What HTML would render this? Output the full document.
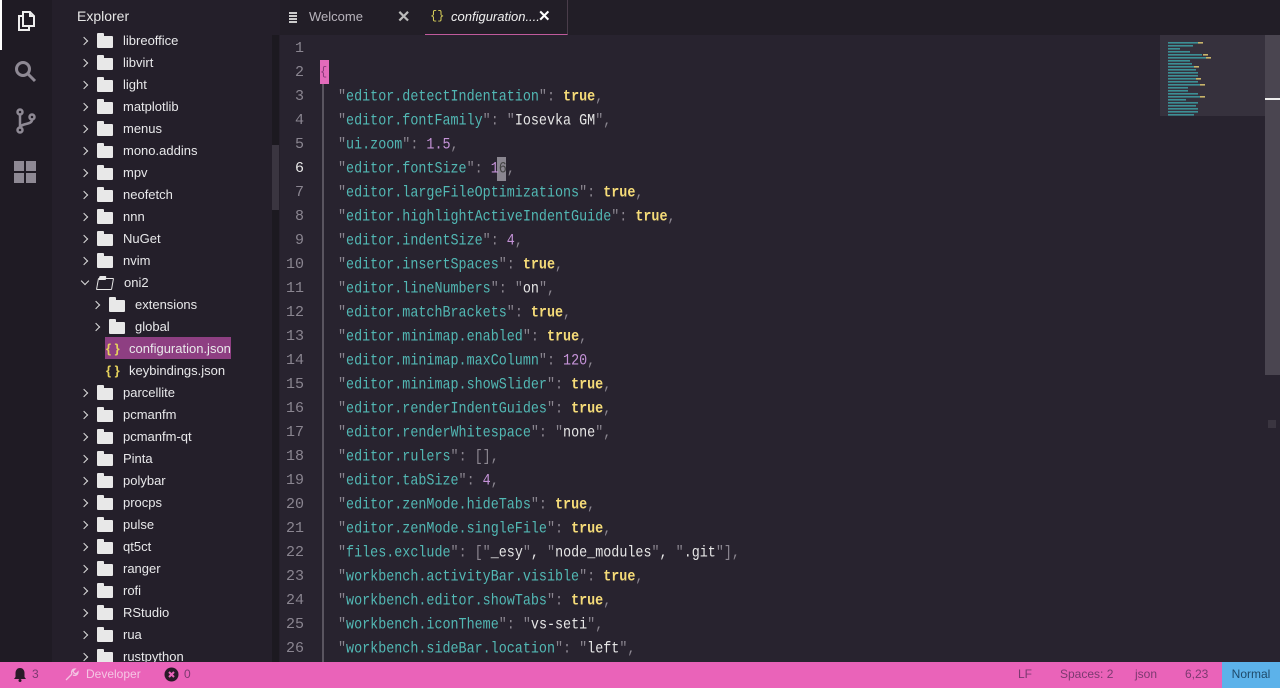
<!DOCTYPE html>
<html><head><meta charset="utf-8"><style>
*{margin:0;padding:0;box-sizing:border-box}
body{width:1280px;height:688px;overflow:hidden;background:#28232f;font-family:"Liberation Sans",sans-serif;position:relative}
.act{position:absolute;left:0;top:0;width:52px;height:662px;background:#1f1b24}
.side{position:absolute;left:52px;top:0;width:228px;height:662px;background:#241f2a}
.sb{position:absolute;left:272px;top:35px;width:7px;height:627px;background:#1c1920}
.sbt{position:absolute;left:272px;top:145px;width:7px;height:65px;background:#3a3540}
.title{position:absolute;left:77px;top:8px;color:#e6e6e6;font-size:14px}
.row{position:absolute;height:22px;line-height:22px;color:#e8e8ea;font-size:13px;white-space:nowrap}
.chev{position:absolute;width:6px;height:6px;border-right:1.6px solid #ddd;border-bottom:1.6px solid #ddd;transform:rotate(-45deg)}
.fold{position:absolute;width:16px;height:12px;background:#e8e8e8;border-radius:1px}
.fold:before{content:"";position:absolute;left:0;top:-3px;width:7px;height:4px;background:#e8e8e8;border-radius:1px 1px 0 0}
.tabs{position:absolute;left:280px;top:0;width:1000px;height:35px;background:#221e27}
.ed{position:absolute;left:280px;top:35px;width:1000px;height:627px;background:#28232f}
.ln{position:absolute;left:280px;width:24px;text-align:right;color:#8a8590;font-family:"Liberation Mono",monospace;font-size:15px;line-height:24px}
.code{position:absolute;left:338px;font-family:"Liberation Mono",monospace;font-size:13.4px;line-height:24px;white-space:pre;color:#8b8690;transform:scaleY(1.15);transform-origin:left center}
.k{color:#52b8b4}.q{color:#8b8690}.t{color:#f5db78;font-weight:bold}.n{color:#c593d8}.s{color:#e6e6e6}
.status{position:absolute;left:0;top:662px;width:1280px;height:26px;background:#ea63b9;font-size:12px;color:#7b3a70;line-height:24px}
.status span{position:absolute}
</style></head><body>
<div class="act">
 <div style="position:absolute;left:0;top:0;width:2px;height:50px;background:#fff"></div>
 <svg style="position:absolute;left:14px;top:9px" width="24" height="24" viewBox="0 0 24 24" fill="none" stroke="#eee" stroke-width="2"><path d="M9 3h7l4 4v10H9z"/><path d="M16 3v4h4"/><path d="M9 7H5v14h10v-4"/></svg>
 <svg style="position:absolute;left:13px;top:59px" width="26" height="26" viewBox="0 0 26 26" fill="none" stroke="#8e8994" stroke-width="3"><circle cx="10" cy="10" r="6.5"/><path d="M15 15l7 7"/></svg>
 <svg style="position:absolute;left:14px;top:108px" width="24" height="28" viewBox="0 0 24 28" fill="none" stroke="#8e8994" stroke-width="2.5"><circle cx="6" cy="4" r="2.5"/><circle cx="6" cy="22" r="2.5"/><circle cx="18" cy="9" r="2.5"/><path d="M6 7v12M18 12c0 5-12 3-12 8"/></svg>
 <div style="position:absolute;left:14px;top:161px;width:10px;height:10px;background:#8e8994"></div>
 <div style="position:absolute;left:26px;top:161px;width:10px;height:10px;background:#8e8994"></div>
 <div style="position:absolute;left:14px;top:173px;width:10px;height:10px;background:#8e8994"></div>
 <div style="position:absolute;left:26px;top:173px;width:10px;height:10px;background:#8e8994"></div>
</div>
<div class="side"></div>
<div class="sb"></div><div class="sbt"></div>
<div class="title">Explorer</div>
<div id="tree"></div>
<div class="tabs">
 <div style="position:absolute;left:9px;top:12px;width:8px;height:1.5px;background:#ccc;box-shadow:0 3px 0 #ccc,0 6px 0 #ccc,0 9px 0 #ccc"></div>
 <div style="position:absolute;left:29px;top:9px;color:#b8b4bc;font-size:13px">Welcome</div>
 <div style="position:absolute;left:117px;top:7px;color:#bbb;font-size:16px;font-weight:bold">✕</div>
 <div style="position:absolute;left:145px;top:0;width:143px;height:35px;border-bottom:1px solid #c05a9c;border-right:1px solid #4a3d4a"></div>
 <div style="position:absolute;left:150px;top:9px;color:#d8d05a;font-size:12px;font-family:'Liberation Mono',monospace">{}</div>
 <div style="position:absolute;left:171px;top:9px;color:#f0f0f0;font-size:13px;font-style:italic">configuration....</div>
 <div style="position:absolute;left:258px;top:7px;color:#fff;font-size:15px;font-weight:bold">✕</div>
</div>
<div class="ed"></div>
<div style="position:absolute;left:322px;top:61px;width:2px;height:601px;background:#5a5560"></div>
<div style="position:absolute;left:320px;top:60px;width:9px;height:24px;background:#e36bbb;color:#8a3a7a;font-size:12px;line-height:24px;font-family:'Liberation Mono',monospace">{</div>
<div style="position:absolute;left:497px;top:157px;width:9px;height:24px;background:#8a8690"></div>
<!-- minimap -->
<div style="position:absolute;left:1160px;top:35px;width:105px;height:81px;background:#36313d"></div>
<svg style="position:absolute;left:1165px;top:38px" width="80" height="80">
<g fill="#3c8f96"><rect x="3" y="4" width="30" height="1.6"/><rect x="3" y="7" width="25" height="1.6"/><rect x="3" y="10" width="12" height="1.6"/><rect x="3" y="13" width="22" height="1.6"/><rect x="3" y="16" width="34" height="1.6"/><rect x="3" y="19" width="38" height="1.6"/><rect x="3" y="22" width="22" height="1.6"/><rect x="3" y="25" width="24" height="1.6"/><rect x="3" y="28" width="26" height="1.6"/><rect x="3" y="31" width="28" height="1.6"/><rect x="3" y="34" width="30" height="1.6"/><rect x="3" y="37" width="30" height="1.6"/><rect x="3" y="40" width="32" height="1.6"/><rect x="3" y="43" width="30" height="1.6"/><rect x="3" y="46" width="32" height="1.6"/><rect x="3" y="49" width="20" height="1.6"/><rect x="3" y="52" width="20" height="1.6"/><rect x="3" y="55" width="30" height="1.6"/><rect x="3" y="58" width="32" height="1.6"/><rect x="3" y="61" width="18" height="1.6"/><rect x="3" y="64" width="30" height="1.6"/><rect x="3" y="67" width="28" height="1.6"/><rect x="3" y="70" width="30" height="1.6"/><rect x="3" y="73" width="30" height="1.6"/><rect x="3" y="76" width="26" height="1.6"/></g>
<g fill="#c9b46a"><rect x="33" y="4" width="5" height="1.6"/><rect x="38" y="16" width="5" height="1.6"/><rect x="41" y="19" width="5" height="1.6"/><rect x="29" y="28" width="5" height="1.6"/><rect x="31" y="40" width="5" height="1.6"/><rect x="35" y="46" width="5" height="1.6"/><rect x="35" y="58" width="5" height="1.6"/></g>
</svg>
<div style="position:absolute;left:1265px;top:35px;width:15px;height:340px;background:#4a4550"></div>
<div style="position:absolute;left:1265px;top:98px;width:15px;height:2px;background:#eee"></div>
<div style="position:absolute;left:1268px;top:420px;width:8px;height:8px;background:#3a3540"></div>
<div id="lines"></div>
<div class="status">
 <svg style="position:absolute;left:13px;top:5px" width="14" height="15" viewBox="0 0 14 15"><path d="M7 1c-3 0-4.5 2.5-4.5 5v4L1 12h12l-1.5-2V6C11.5 3.5 10 1 7 1z" fill="#2a1a28"/><circle cx="7" cy="13.5" r="1.5" fill="#2a1a28"/></svg>
 <span style="left:32px">3</span>
 <svg style="position:absolute;left:64px;top:5px" width="15" height="15" viewBox="0 0 15 15" fill="none" stroke="#f3c3e3" stroke-width="1.3"><path d="M2 13l6-6M8 7c-1-2 0-5 3-5l-2 2 1 2 2 1 2-2c0 3-3 4-5 3"/></svg>
 <span style="left:86px;color:#f5c6e4">Developer</span>
 <svg style="position:absolute;left:164px;top:5px" width="15" height="15" viewBox="0 0 15 15"><circle cx="7.5" cy="7.5" r="7" fill="#2a1a28"/><path d="M5 5l5 5M10 5l-5 5" stroke="#ea63b9" stroke-width="2"/></svg>
 <span style="left:184px">0</span>
 <span style="left:1018px">LF</span>
 <span style="left:1060px">Spaces: 2</span>
 <span style="left:1135px">json</span>
 <span style="left:1185px">6,23</span>
 <div style="position:absolute;left:1222px;top:0;width:58px;height:26px;background:#5cb2ea;color:#1f4a6a;text-align:center">Normal</div>
</div>
<script>
var tree=[["libreoffice",0],["libvirt",0],["light",0],["matplotlib",0],["menus",0],["mono.addins",0],["mpv",0],["neofetch",0],["nnn",0],["NuGet",0],["nvim",0],["oni2",2],["extensions",1],["global",1],["configuration.json",3],["keybindings.json",4],["parcellite",0],["pcmanfm",0],["pcmanfm-qt",0],["Pinta",0],["polybar",0],["procps",0],["pulse",0],["qt5ct",0],["ranger",0],["rofi",0],["RStudio",0],["rua",0],["rustpython",0]];
var h="";tree.forEach(function(r,i){var y=30+i*22;var t=r[1];
if(t==0){h+='<div class="chev" style="left:81px;top:'+(y+8)+'px"></div><div class="fold" style="left:97px;top:'+(y+6)+'px"></div><div class="row" style="left:123px;top:'+y+'px">'+r[0]+'</div>';}
else if(t==2){h+='<div class="chev" style="left:82px;top:'+(y+6)+'px;transform:rotate(45deg)"></div><div class="fold" style="left:97px;top:'+(y+6)+'px;background:none;border:1.6px solid #e8e8e8;transform:skewX(-10deg)"></div><div class="row" style="left:124px;top:'+y+'px">'+r[0]+'</div>';}
else if(t==1){h+='<div class="chev" style="left:93px;top:'+(y+8)+'px"></div><div class="fold" style="left:109px;top:'+(y+6)+'px"></div><div class="row" style="left:135px;top:'+y+'px">'+r[0]+'</div>';}
else{h+=(t==3?'<div style="position:absolute;left:105px;top:'+(y-1)+'px;width:126px;height:22px;background:#8e3f82"></div>':'')+'<div class="row" style="left:106px;top:'+y+'px;color:#e5d15c;font-weight:bold">{ }</div><div class="row" style="left:129px;top:'+y+'px">'+r[0]+'</div>';}
});
document.getElementById('tree').innerHTML=h;
function K(s){return '<span class="q">"</span><span class="k">'+s+'</span><span class="q">"</span>: '}
function S(s){return '<span class="q">"</span><span class="s">'+s+'</span><span class="q">"</span>'}
var T='<span class="t">true</span>,';function N(n){return '<span class="n">'+n+'</span>,'}
var code=["","","",K("editor.detectIndentation")+T,K("editor.fontFamily")+S("Iosevka GM")+",",K("ui.zoom")+N("1.5"),K("editor.fontSize")+'<span class="n">1</span><span style="color:#444">6</span>,',K("editor.largeFileOptimizations")+T,K("editor.highlightActiveIndentGuide")+T,K("editor.indentSize")+N("4"),K("editor.insertSpaces")+T,K("editor.lineNumbers")+S("on")+",",K("editor.matchBrackets")+T,K("editor.minimap.enabled")+T,K("editor.minimap.maxColumn")+N("120"),K("editor.minimap.showSlider")+T,K("editor.renderIndentGuides")+T,K("editor.renderWhitespace")+S("none")+",",K("editor.rulers")+"[],",K("editor.tabSize")+N("4"),K("editor.zenMode.hideTabs")+T,K("editor.zenMode.singleFile")+T,K("files.exclude")+"["+S("_esy")+'<span class="s">,</span> '+S("node_modules")+'<span class="s">,</span> '+S(".git")+"],",K("workbench.activityBar.visible")+T,K("workbench.editor.showTabs")+T,K("workbench.iconTheme")+S("vs-seti")+",",K("workbench.sideBar.location")+S("left")+","];
var l="";for(var i=1;i<=26;i++){var y=37+(i-1)*24;l+='<div class="ln" style="top:'+y+'px;'+(i==6?'color:#e8e8e8':'')+'">'+i+'</div>';if(i>=3)l+='<div class="code" style="top:'+(y+1)+'px">'+code[i]+'</div>';}
document.getElementById('lines').innerHTML=l;
</script>
</body></html>
